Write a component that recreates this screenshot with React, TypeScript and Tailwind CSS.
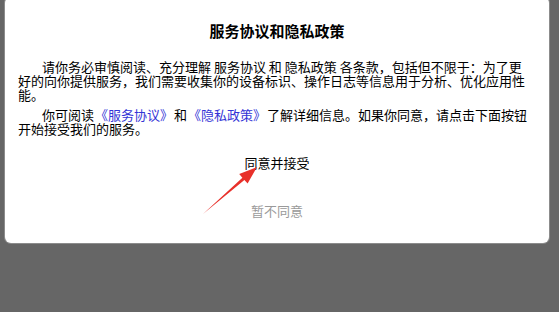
export default function App() {
  const font = { fontFamily: '"Noto Sans CJK SC", "Noto Sans", sans-serif' };
  const run = "inline-block indent-0 leading-[14px]";
  const link = `${run} mx-[1px] text-[#3434d6]`;

  return (
    <div
      className="relative h-[312px] w-[559px] overflow-hidden bg-[#666666] px-[5px]"
      style={font}
    >
      <div className="-mt-[3px] flex h-[246px] w-[544px] flex-col rounded-[6px] bg-white pt-[24px] ring-1 ring-[#8c8c8c]">
        <h1 className="text-center text-[15px] font-bold leading-[20px] text-black">
          服务协议和隐私政策
        </h1>

        <div className="mt-[19px] pl-[13px] pr-[16px] text-[13px] leading-[14px] text-black">
          <p className="indent-[24px]">
            请你务必审慎阅读、充分理解 服务协议 和 隐私政策
            各条款，包括但不限于：为了更好的向你提供服务，我们需要收集你的设备标识、操作日志等信息用于分析、优化应用性能。
          </p>
          <p className="mt-[6px] indent-[24px]">
            <span className={run}>你可阅读</span>
            <span className={link}>《服务协议》</span>
            <span className={run}>和</span>
            <span className={link}>《隐私政策》</span>
            <span className={run}>了解详细信息。如果你同意，请点击下面按钮</span>
            <br />
            <span className={run}>开始接受我们的服务。</span>
          </p>
        </div>

        <button
          type="button"
          className="mx-auto mt-[17px] text-[13px] leading-[20px] text-black"
        >
          同意并接受
        </button>
        <button
          type="button"
          className="mx-auto mt-[28px] text-[13px] leading-[20px] text-[#9a9a9a]"
        >
          暂不同意
        </button>
      </div>

      {/* red annotation arrow */}
      <svg
        className="pointer-events-none absolute left-0 top-0"
        width="559"
        height="312"
        viewBox="0 0 559 312"
      >
        <polygon
          points="203,214 244.4,179.9 247.6,183.6 257,167 239.2,174.0 242.4,177.7"
          fill="#e8302a"
        />
      </svg>
    </div>
  );
}
